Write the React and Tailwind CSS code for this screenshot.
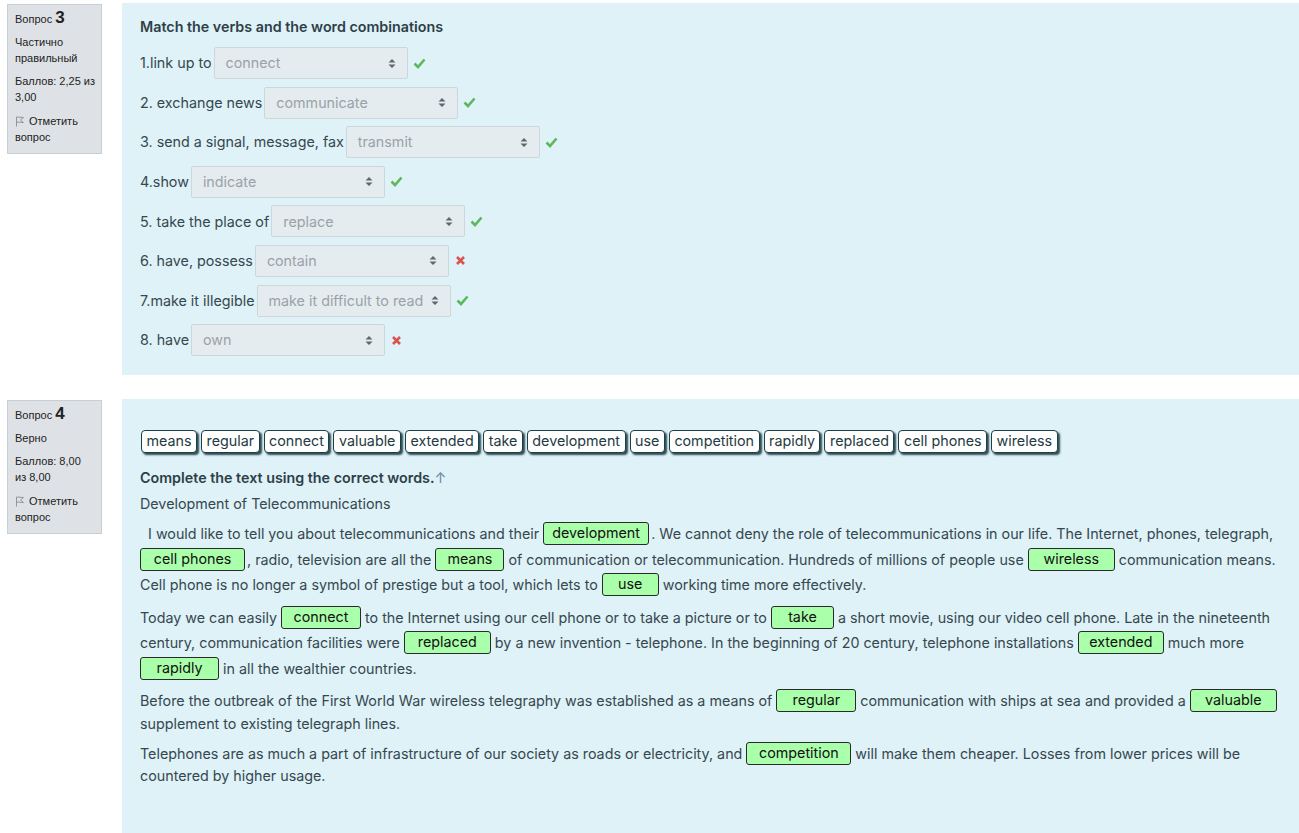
import React from "react";

const FONT = { fontFamily: "Inter, 'Noto Sans', sans-serif" };
const INFO_FONT = { fontFamily: "'Liberation Sans', Arial, sans-serif" };

function Flag() {
  return (
    <svg width="10" height="11" viewBox="0 0 10 11" className="inline-block mr-[4px] -mt-[2px]">
      <path d="M1.5 10.5 L1.5 1 L8.5 1.5 L5.5 4 L8.5 6.5 L1.5 6" fill="none" stroke="#8a8f94" strokeWidth="0.9" />
    </svg>
  );
}

function Info({ num, state, score }) {
  return (
    <div
      className="w-[95px] shrink-0 bg-[#dee2e6] border border-[#c9ced3] pl-[7px] pr-[3px] pt-[3px] pb-[8px] text-[11px] leading-[16px] text-[#222]"
      style={INFO_FONT}
    >
      <div className="leading-[20px]">
        Вопрос <span className="text-[17px] font-bold">{num}</span>
      </div>
      <div className="mt-[5px]">{state}</div>
      <div className="mt-[7px]">{score}</div>
      <div className="mt-[8px]">
        <Flag />
        Отметить<br />вопрос
      </div>
    </div>
  );
}

function Check() {
  return (
    <svg width="13" height="11" viewBox="0 0 13 11" className="ml-[5px]">
      <path d="M1.5 5.5 L5 9 L11.5 1.5" fill="none" stroke="#5cb85c" strokeWidth="2.6" />
    </svg>
  );
}

function Cross() {
  return (
    <svg width="11" height="11" viewBox="0 0 11 11" className="ml-[6px]">
      <path d="M2 2 L9 9 M9 2 L2 9" fill="none" stroke="#d9534f" strokeWidth="2.6" />
    </svg>
  );
}

function Select({ value, ok }) {
  return (
    <div className="flex items-center">
      <div className="w-[194px] h-[32px] bg-[#e5ecef] border border-[#cdd6da] rounded-[2px] flex items-center justify-between pl-[11px] pr-[11px] text-[#9aa2a8]">
        <span>{value}</span>
        <svg width="8" height="11" viewBox="0 0 8 11">
          <path d="M0.5 4.5 L4 1 L7.5 4.5 Z M0.5 6.5 L4 10 L7.5 6.5 Z" fill="#5f666c" />
        </svg>
      </div>
      {ok ? <Check /> : <Cross />}
    </div>
  );
}

const rows = [
  ["1.link up to", "connect", true],
  ["2. exchange news", "communicate", true],
  ["3. send a signal, message, fax", "transmit", true],
  ["4.show", "indicate", true],
  ["5. take the place of", "replace", true],
  ["6. have, possess", "contain", false],
  ["7.make it illegible", "make it difficult to read", true],
  ["8. have", "own", false],
];

const tiles = [
  "means",
  "regular",
  "connect",
  "valuable",
  "extended",
  "take",
  "development",
  "use",
  "competition",
  "rapidly",
  "replaced",
  "cell phones",
  "wireless",
];

function Drop({ w, tight, first, children }) {
  return (
    <span
      className={`inline-flex items-center justify-center h-[23px] bg-[#aaffaa] border border-[#2a2a2a] rounded-[3px] text-[#111] leading-none pb-[1px] ${
        first ? "ml-0" : "ml-[4px]"
      } ${tight ? "mr-[2px]" : "mr-[4px]"}`}
      style={{ width: w }}
    >
      {children}
    </span>
  );
}

function Line({ tall = true, children }) {
  return (
    <div className={`flex items-center whitespace-pre ${tall ? "h-[25.5px]" : "h-[20px]"}`}>
      {children}
    </div>
  );
}

export default function App() {
  return (
    <div className="bg-white min-h-[833px] w-[1299px] overflow-hidden text-[14.3px] text-[#37474f]" style={FONT}>
      {/* Question 3 */}
      <div className="flex pl-[7px] pt-[3px]">
        <div className="pt-[1px]">
          <Info num="3" state={<>Частично<br />правильный</>} score={<>Баллов: 2,25 из<br />3,00</>} />
        </div>
        <div className="ml-[20px] flex-1 bg-[#def2f8] h-[372px] pl-[18px] pt-[15px]">
          <div className="font-semibold text-[#2f3f48] leading-[18px]">Match the verbs and the word combinations</div>
          <div className="mt-[11px] flex flex-col gap-[7.6px]">
            {rows.map(([label, value, ok], i) => (
              <div key={i} className="flex items-center h-[32px]">
                <span className="mr-[2px]">{label}</span>
                <Select value={value} ok={ok} />
              </div>
            ))}
          </div>
        </div>
      </div>

      {/* Question 4 */}
      <div className="flex pl-[7px] mt-[24px]">
        <div className="pt-[1px]">
          <Info num="4" state="Верно" score={<>Баллов: 8,00<br />из 8,00</>} />
        </div>
        <div className="ml-[20px] flex-1 bg-[#def2f8] min-h-[440px] pl-[18px] pt-[31px]">
          <div className="flex gap-[4px] pl-[1px]">
            {tiles.map((t) => (
              <span
                key={t}
                className="h-[23px] flex items-center px-[4.5px] bg-white border border-[#1d3f47] rounded-[4px] text-[#243a42] shadow-[2px_2px_2px_#2c4a50] leading-none pb-[1px]"
              >
                {t}
              </span>
            ))}
          </div>
          <div className="mt-[14px] font-semibold text-[#2f3f48] h-[22px] flex items-center">
            Complete the text using the correct words.<span className="font-normal text-[#6a8aa0]">↑</span>
          </div>
          <div className="mt-[4px] h-[22px] flex items-center">Development of Telecommunications</div>

          <div className="mt-[6px]">
            <Line>
              {"  I would like to tell you about telecommunications and their"}
              <Drop w={106} tight>development</Drop>
              {". We cannot deny the role of telecommunications in our life. The Internet, phones, telegraph,"}
            </Line>
            <Line>
              <Drop w={105} first tight>cell phones</Drop>
              {", radio, television are all the"}
              <Drop w={69}>means</Drop>
              {"of communication or telecommunication. Hundreds of millions of people use"}
              <Drop w={87}>wireless</Drop>
              {"communication means."}
            </Line>
            <Line>
              {"Cell phone is no longer a symbol of prestige but a tool, which lets to"}
              <Drop w={57}>use</Drop>
              {"working time more effectively."}
            </Line>
          </div>

          <div className="mt-[7px]">
            <Line>
              {"Today we can easily"}
              <Drop w={80}>connect</Drop>
              {"to the Internet using our cell phone or to take a picture or to"}
              <Drop w={63}>take</Drop>
              {"a short movie, using our video cell phone. Late in the nineteenth"}
            </Line>
            <Line>
              {"century, communication facilities were"}
              <Drop w={87}>replaced</Drop>
              {"by a new invention - telephone. In the beginning of 20 century, telephone installations"}
              <Drop w={86}>extended</Drop>
              {"much more"}
            </Line>
            <Line>
              <Drop w={79} first>rapidly</Drop>
              {"in all the wealthier countries."}
            </Line>
          </div>

          <div className="mt-[7px]">
            <Line>
              {"Before the outbreak of the First World War wireless telegraphy was established as a means of"}
              <Drop w={80}>regular</Drop>
              {"communication with ships at sea and provided a"}
              <Drop w={87}>valuable</Drop>
            </Line>
            <Line tall={false}>{"supplement to existing telegraph lines."}</Line>
          </div>

          <div className="mt-[7px]">
            <Line>
              {"Telephones are as much a part of infrastructure of our society as roads or electricity, and"}
              <Drop w={105}>competition</Drop>
              {"will make them cheaper. Losses from lower prices will be"}
            </Line>
            <Line tall={false}>{"countered by higher usage."}</Line>
          </div>
        </div>
      </div>
    </div>
  );
}
